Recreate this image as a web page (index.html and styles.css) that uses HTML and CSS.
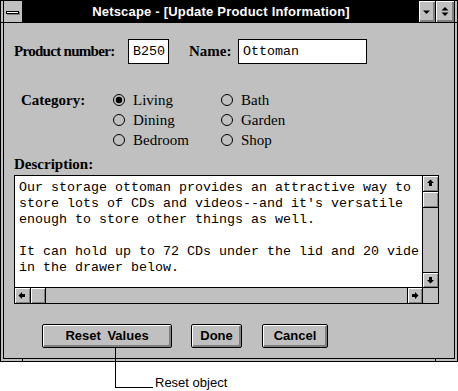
FILE: index.html
```html
<!DOCTYPE html>
<html>
<head>
<meta charset="utf-8">
<title>Update Product Information</title>
<link rel="stylesheet" href="styles.css">
</head>
<body>
<div class="window">
  <span class="mark mark-hl"></span>
  <span class="mark mark-hr"></span>
  <span class="mark mark-vl"></span>
  <span class="mark mark-vr"></span>
  <div class="inner">
    <div class="caption">
      <div class="sysmenu">
        <svg width="18" height="21" viewBox="0 0 18 21" shape-rendering="crispEdges">
          <rect x="3" y="13" width="13" height="1" fill="#808080"/>
          <rect x="15" y="11" width="1" height="3" fill="#808080"/>
          <rect x="2" y="10" width="13" height="3" fill="#000"/>
          <rect x="3" y="11" width="11" height="1" fill="#fff"/>
        </svg>
      </div>
      <div class="title">Netscape - [Update Product Information]</div>
      <div class="capbtn minbtn">
        <svg width="16" height="21" viewBox="0 0 16 21"><polygon points="4,9.5 11,9.5 7.5,13" fill="#000"/></svg>
      </div>
      <div class="capbtn maxbtn">
        <svg width="18" height="21" viewBox="0 0 18 21"><polygon points="5.5,9.5 12.5,9.5 9,6" fill="#000"/><polygon points="5.5,11.5 12.5,11.5 9,15" fill="#000"/></svg>
      </div>
    </div>
    <div class="client">
      <div class="fields">
        <span class="lbl lbl-prod">Product number:</span>
        <div class="field field-num">B250</div>
        <span class="lbl lbl-name">Name:</span>
        <div class="field field-name">Ottoman</div>
      </div>
      <div class="category">
        <span class="lbl cat-lbl">Category:</span>
        <div class="radio"><svg width="12" height="12" viewBox="0 0 12 12"><circle cx="6" cy="6" r="5.5" fill="none" stroke="#000"/><circle cx="6" cy="6" r="3.2" fill="#000"/></svg><span>Living</span></div>
        <div class="radio"><svg width="12" height="12" viewBox="0 0 12 12"><circle cx="6" cy="6" r="5.5" fill="none" stroke="#000"/></svg><span>Bath</span></div>
        <div class="radio"><svg width="12" height="12" viewBox="0 0 12 12"><circle cx="6" cy="6" r="5.5" fill="none" stroke="#000"/></svg><span>Dining</span></div>
        <div class="radio"><svg width="12" height="12" viewBox="0 0 12 12"><circle cx="6" cy="6" r="5.5" fill="none" stroke="#000"/></svg><span>Garden</span></div>
        <div class="radio"><svg width="12" height="12" viewBox="0 0 12 12"><circle cx="6" cy="6" r="5.5" fill="none" stroke="#000"/></svg><span>Bedroom</span></div>
        <div class="radio"><svg width="12" height="12" viewBox="0 0 12 12"><circle cx="6" cy="6" r="5.5" fill="none" stroke="#000"/></svg><span>Shop</span></div>
      </div>
      <div class="lbl desc-lbl">Description:</div>
      <div class="desc">
        <div class="desc-text">Our storage ottoman provides an attractive way to
store lots of CDs and videos--and it's versatile
enough to store other things as well.

It can hold up to 72 CDs under the lid and 20 vide
in the drawer below.</div>
        <div class="vscroll">
          <div class="sb-btn sb-up"><svg width="15" height="15" viewBox="0 0 15 15"><polygon points="7.5,3.5 11,7 9,7 9,10 6,10 6,7 4,7" fill="#000"/></svg></div>
          <div class="sb-thumb sb-vthumb"></div>
          <div class="sb-track"></div>
          <div class="sb-btn sb-down"><svg width="15" height="14" viewBox="0 0 15 14"><polygon points="7.5,10.5 11,7 9,7 9,4 6,4 6,7 4,7" fill="#000"/></svg></div>
        </div>
        <div class="hscroll">
          <div class="sb-btn sb-left"><svg width="15" height="15" viewBox="0 0 15 15"><polygon points="3.5,7.5 7,4 7,6 10,6 10,9 7,9 7,11" fill="#000"/></svg></div>
          <div class="sb-thumb sb-hthumb"></div>
          <div class="sb-track"></div>
          <div class="sb-btn sb-right"><svg width="14" height="15" viewBox="0 0 14 15"><polygon points="10.5,7.5 7,4 7,6 4,6 4,9 7,9 7,11" fill="#000"/></svg></div>
        </div>
        <div class="sb-corner"></div>
      </div>
      <div class="buttons">
        <div class="btn btn-reset">Reset Values</div>
        <div class="btn btn-done">Done</div>
        <div class="btn btn-cancel">Cancel</div>
      </div>
    </div>
  </div>
</div>
<div class="callout"></div>
<div class="callout-text">Reset object</div>
</body>
</html>
```
FILE: styles.css
```css
html, body {
  margin: 0;
  padding: 0;
}
body {
  width: 458px;
  height: 391px;
  background: #fff;
  position: relative;
  overflow: hidden;
  font-family: "Liberation Serif", "Times New Roman", serif;
}
.window {
  position: relative;
  width: 458px;
  height: 362px;
  box-sizing: border-box;
  border: 1px solid #000;
  padding: 0 2px 2px 2px;
  background: #c0c0c0;
}
.mark {
  position: absolute;
  background: #000;
}
.mark-hl { top: 21px; left: 0; width: 2px; height: 1px; }
.mark-hr { top: 21px; right: 0; width: 2px; height: 1px; }
.mark-vl { top: 358px; left: 21px; width: 1px; height: 2px; }
.mark-vr { top: 358px; left: 434px; width: 1px; height: 2px; }
.inner {
  height: 100%;
  box-sizing: border-box;
  border: 1px solid #000;
  border-top: none;
  display: flex;
  flex-direction: column;
}
.caption {
  height: 22px;
  flex: none;
  box-sizing: border-box;
  border-bottom: 1px solid #000;
  display: flex;
}
.sysmenu {
  width: 19px;
  box-sizing: border-box;
  border-right: 1px solid #000;
  background: #c0c0c0;
}
.sysmenu svg, .capbtn svg, .sb-btn svg { display: block; }
.title {
  flex: 1;
  background: #000;
  color: #fff;
  font-family: "Liberation Sans", Arial, sans-serif;
  font-weight: bold;
  font-size: 13px;
  letter-spacing: 0.2px;
  line-height: 21px;
  text-align: center;
  white-space: nowrap;
}
.capbtn {
  background: #c0c0c0;
  box-sizing: border-box;
  box-shadow: inset 1px 1px #fff, inset -2px -2px #808080;
}
.minbtn {
  width: 17px;
  border-right: 1px solid #000;
}
.maxbtn {
  width: 18px;
}
.client {
  flex: 1;
  padding: 16px 0 0 10px;
}
.lbl {
  font-weight: bold;
  font-size: 15px;
  color: #000;
  white-space: nowrap;
}
.fields {
  display: flex;
  align-items: center;
  height: 25px;
}
.lbl-prod {
  width: 114px;
  letter-spacing: -0.7px;
}
.lbl-name {
  width: 49px;
  margin-left: 20px;
}
.field {
  height: 25px;
  box-sizing: border-box;
  border: 1px solid #000;
  background: #fff;
  padding-left: 4px;
  font-family: "Liberation Mono", "Courier New", monospace;
  font-size: 13.333px;
  line-height: 23px;
  white-space: nowrap;
  overflow: hidden;
}
.field-num { width: 41px; }
.field-name { width: 129px; }
.category {
  margin: 26px 0 0 7px;
  display: grid;
  grid-template-columns: 92px 108px auto;
  grid-auto-rows: 20px;
}
.cat-lbl {
  grid-row: 1 / span 3;
  line-height: 20px;
}
.radio {
  display: flex;
  align-items: center;
  gap: 8px;
  font-size: 15px;
  white-space: nowrap;
}
.radio svg { display: block; flex: none; }
.desc-lbl {
  margin-top: 6px;
  height: 17px;
  line-height: 17px;
}
.desc {
  margin-top: 2px;
  width: 425px;
  height: 129px;
  box-sizing: border-box;
  border: 1px solid #000;
  background: #c0c0c0;
  display: grid;
  grid-template-columns: 407px 16px;
  grid-template-rows: 111px 16px;
}
.desc-text {
  background: #fff;
  padding: 4px 0 0 4px;
  font-family: "Liberation Mono", "Courier New", monospace;
  font-size: 13.333px;
  line-height: 16px;
  white-space: pre;
  overflow: hidden;
}
.vscroll {
  border-left: 1px solid #000;
  display: flex;
  flex-direction: column;
}
.hscroll {
  border-top: 1px solid #000;
  display: flex;
}
.sb-corner {
  border-left: 1px solid #000;
  border-top: 1px solid #000;
  background: #c0c0c0;
}
.sb-btn, .sb-thumb {
  background: #c0c0c0;
  box-sizing: border-box;
  box-shadow: inset 1px 1px #fff, inset -1px -1px #808080;
  flex: none;
}
.sb-track {
  flex: 1;
  background: #c0c0c0;
}
.sb-up { height: 16px; border-bottom: 1px solid #000; }
.sb-vthumb { height: 16px; border-bottom: 1px solid #000; }
.sb-down { height: 15px; border-top: 1px solid #000; }
.sb-left { width: 16px; border-right: 1px solid #000; }
.sb-hthumb { width: 15px; border-right: 1px solid #000; }
.sb-right { width: 15px; border-left: 1px solid #000; }
.buttons {
  display: flex;
  margin: 20px 0 0 28px;
}
.btn {
  height: 24px;
  box-sizing: border-box;
  border: 1px solid #000;
  border-radius: 2px;
  background: #c0c0c0;
  box-shadow: inset 1px 1px #fff, inset -2px -2px #808080;
  font-family: "Liberation Sans", Arial, sans-serif;
  font-weight: bold;
  font-size: 13px;
  line-height: 21px;
  text-align: center;
  color: #000;
  white-space: nowrap;
}
.btn-reset { width: 130px; word-spacing: 3px; }
.btn-done { width: 51px; margin-left: 19px; }
.btn-cancel { width: 66px; margin-left: 20px; }
.callout {
  position: absolute;
  left: 115px;
  top: 348px;
  width: 37px;
  height: 39px;
  border-left: 1px solid #000;
  border-bottom: 1px solid #000;
}
.callout-text {
  position: absolute;
  left: 155px;
  top: 375px;
  font-family: "Liberation Sans", Arial, sans-serif;
  font-size: 13px;
  line-height: 15px;
  color: #000;
  white-space: nowrap;
}
```
